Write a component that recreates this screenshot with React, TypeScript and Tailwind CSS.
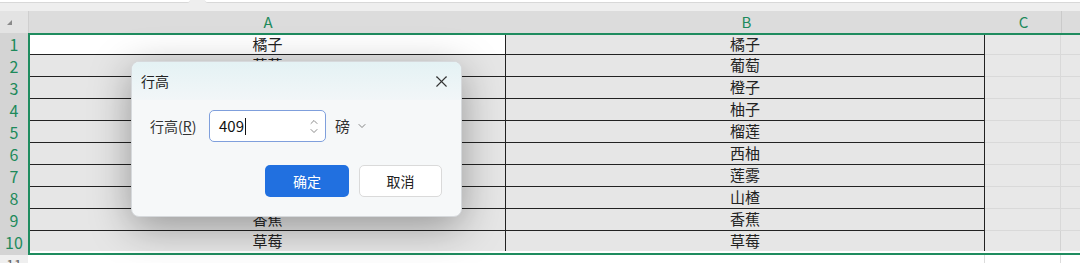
import React from "react";
import { X, ChevronUp, ChevronDown } from "lucide-react";

const fruitsA = ["橘子", "葡萄", "橙子", "柚子", "榴莲", "西柚", "莲雾", "山楂", "香蕉", "草莓"];
const fruitsB = ["橘子", "葡萄", "橙子", "柚子", "榴莲", "西柚", "莲雾", "山楂", "香蕉", "草莓"];

const font = { fontFamily: '"Noto Sans CJK SC", "Noto Sans", sans-serif' };

function Dialog() {
  return (
    <div className="absolute left-[131px] top-[61px] w-[331px] h-[156px] rounded-[8px] border border-[#d6d9dc] bg-[#f6f8f9] shadow-[0_10px_40px_rgba(0,0,0,0.35)] overflow-hidden">
      <div className="h-[38px] flex items-center justify-between pl-[9px] pr-[10px] bg-gradient-to-b from-[#e4f2f4] to-[#f2f6f8]">
        <span className="text-[14px] text-[#222]">行高</span>
        <X size={19} strokeWidth={1.4} className="text-[#333]" />
      </div>
      <div className="flex items-center mt-[10px] pl-[18px]">
        <span className="text-[14px] text-[#333] w-[59px]">
          行高(<span className="underline underline-offset-2">R</span>)
        </span>
        <div className="flex items-center justify-between w-[117px] h-[32px] rounded-[5px] border border-[#7f9fdc] bg-white pl-[9px] pr-[5px]">
          <span className="flex items-center text-[15px] text-[#111]">
            409<span className="ml-[1px] w-[1px] h-[17px] bg-[#111]" />
          </span>
          <div className="flex flex-col items-center -space-y-[3px] text-[#666]">
            <ChevronUp size={12} strokeWidth={1.5} />
            <ChevronDown size={12} strokeWidth={1.5} />
          </div>
        </div>
        <span className="ml-[9px] text-[15px] text-[#333]">磅</span>
        <ChevronDown size={12} strokeWidth={1.6} className="ml-[6px] text-[#666]" />
      </div>
      <div className="flex justify-end gap-[10px] mt-[23px] pr-[19px]">
        <button className="w-[84px] h-[32px] rounded-[5px] bg-[#2170e0] text-white text-[14px]">确定</button>
        <button className="w-[83px] h-[32px] rounded-[5px] bg-white border border-[#dadada] text-[#222] text-[14px]">取消</button>
      </div>
    </div>
  );
}

export default function App() {
  return (
    <div className="relative w-[1080px] h-[263px] overflow-hidden bg-white" style={font}>
      <div className="h-[11px] bg-[#eeeeee] flex items-start">
        <div className="w-[190px] h-[3px] bg-white border-b border-[#d8d8d8] rounded-br-[3px]" />
        <div className="flex-1 ml-[15px] h-[3px] bg-white border-b border-[#d8d8d8] rounded-bl-[3px]" />
      </div>

      <div className="flex h-[22px] bg-[#dcdcdc] text-[15px] text-[#1d8a5b]">
        <div className="w-[29px] bg-[#e3e3e3] relative border-r border-[#cfcfcf]">
          <div className="absolute left-[7px] top-[9px] w-0 h-0 border-l-[5px] border-l-transparent border-b-[5px] border-b-[#8a8a8a]" />
        </div>
        <div className="w-[478px] flex items-center justify-center">A</div>
        <div className="w-[479px] flex items-center justify-center">B</div>
        <div className="w-[76px] flex items-center justify-center border-r border-[#cacaca]">C</div>
        <div className="flex-1" />
      </div>

      <div className="flex">
        <div className="w-[28px] flex flex-col bg-[#d4d4d4] text-[16px] text-[#1d8a5b]">
          {fruitsA.map((_, i) => (
            <div key={i} className="h-[22px] flex items-center justify-center">
              {i + 1}
            </div>
          ))}
          <div className="h-[2px]" />
        </div>
        <div className="flex-1 border-t-2 border-b-2 border-l-2 border-[#1f8c5f] text-[15px] text-[#222]">
          {fruitsA.map((a, i) => {
            const last = i === fruitsA.length - 1;
            const h = last ? "h-[20px]" : i === 0 ? "h-[20px]" : "h-[22px]";
            const line = last ? "" : i === 0 ? "border-b border-[#8f8f8f]" : "border-b border-[#3a3a3a]";
            return (
              <div key={i} className={`flex ${h}`}>
                <div
                  className={`w-[476px] flex items-center justify-center border-r border-[#222] ${line} ${
                    i === 0 ? "bg-white" : "bg-[#e6e6e6]"
                  }`}
                >
                  {a}
                </div>
                <div className={`w-[479px] flex items-center justify-center border-r border-[#222] bg-[#e6e6e6] ${line}`}>
                  {fruitsB[i]}
                </div>
                <div className={`w-[76px] bg-[#e8e8e8] border-r border-[#d2d2d2] ${last ? "" : "border-b border-[#d9d9d9]"}`} />
                <div className={`flex-1 bg-[#e8e8e8] ${last ? "" : "border-b border-[#d9d9d9]"}`} />
              </div>
            );
          })}
        </div>
      </div>

      <div className="flex h-[10px]">
        <div className="w-[28px] bg-[#efefef] text-[14px] text-[#666] flex justify-center items-start leading-[14px] pt-[2px]">11</div>
        <div className="w-[478px] bg-white" />
        <div className="w-[479px] bg-white border-r border-[#dcdcdc]" />
        <div className="w-[76px] bg-white border-r border-[#dcdcdc]" />
        <div className="flex-1 bg-white" />
      </div>

      <Dialog />
    </div>
  );
}
